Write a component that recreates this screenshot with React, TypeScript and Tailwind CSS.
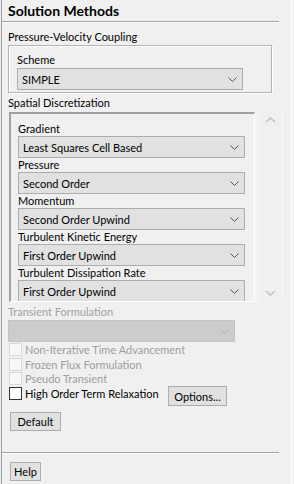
import React from 'react';

const Chevron = ({ color = '#555555' }: { color?: string }) => (
  <svg width="9" height="5" viewBox="0 0 9 5" className="shrink-0">
    <polyline points="0.5,0.5 4.5,4.5 8.5,0.5" fill="none" stroke={color} strokeWidth="1" />
  </svg>
);

const Select = ({ value, className = '' }: { value: string; className?: string }) => (
  <div
    className={`h-[22px] flex items-center justify-between pl-[4px] pr-[5px] bg-[#e1e1e1] border border-[#adadad] text-black ${className}`}
  >
    <span className="leading-none whitespace-nowrap">{value}</span>
    <Chevron />
  </div>
);

const Label = ({ children, className = '' }: { children: React.ReactNode; className?: string }) => (
  <div className={`h-[14px] pb-[2px] flex items-center leading-none whitespace-nowrap ${className}`}>{children}</div>
);

const Check = ({ label, disabled = false, className = '' }: { label: string; disabled?: boolean; className?: string }) => (
  <div className={`flex items-center ${className}`}>
    <div
      className={`w-[13px] h-[13px] ml-[7px] shrink-0 ${
        disabled ? 'bg-[#f7f7f7] border border-[#d9d9d9]' : 'bg-white border border-[#333333]'
      }`}
    />
    <span className={`ml-[3px] leading-none whitespace-nowrap ${disabled ? 'text-[#9d9d9d]' : 'text-black'}`}>
      {label}
    </span>
  </div>
);

const Button = ({ children, className = '' }: { children: React.ReactNode; className?: string }) => (
  <div
    className={`flex items-center justify-center bg-[#e1e1e1] border border-[#adadad] text-black leading-none whitespace-nowrap ${className}`}
  >
    {children}
  </div>
);

const spatial = [
  ['Gradient', 'Least Squares Cell Based'],
  ['Pressure', 'Second Order'],
  ['Momentum', 'Second Order Upwind'],
  ['Turbulent Kinetic Energy', 'First Order Upwind'],
  ['Turbulent Dissipation Rate', 'First Order Upwind'],
];

export default function App() {
  return (
    <div className="w-[294px] h-[484px] bg-[#f0f0f0] pl-[1px] overflow-hidden font-['Lato',sans-serif] text-[11px] text-black">
      <div className="w-[291px] h-full border-l border-[#9c9c9c] border-r border-r-white flex flex-col">
        {/* Title */}
        <div className="h-[21px] flex items-center pl-[6px] text-[14px] font-bold text-black leading-none">
          Solution Methods
        </div>
        <div className="w-[277px] border-t border-[#a0a0a0] border-b border-b-white" />

        {/* Pressure-Velocity Coupling */}
        <div className="h-[22px] flex items-end pl-[6px] pb-[3px] leading-none">Pressure-Velocity Coupling</div>
        <div className="ml-[6px] w-[264px] h-[48px] border border-[#b4b4b4] shadow-[inset_1px_1px_0_#ffffff,1px_1px_0_#ffffff] pl-[8px] pt-[7px]">
          <Label className="h-[15px]">Scheme</Label>
          <Select value="SIMPLE" className="w-[226px]" />
        </div>

        {/* Spatial Discretization */}
        <div className="h-[18px] flex items-center pl-[6px] leading-none">Spatial Discretization</div>
        <div className="ml-[6px] w-[276px] h-[191px] flex">
          <div className="mt-[1px] ml-[1px] w-[246px] h-[190px] border-l-2 border-t-2 border-[#a0a0a0] border-r border-b border-r-white border-b-white pt-[8px] pl-[7px] overflow-hidden">
            {spatial.map(([label, value]) => (
              <div key={label}>
                <Label>{label}</Label>
                <Select value={value} className="w-[227px]" />
              </div>
            ))}
          </div>
          <div className="w-[26px] ml-[2px] h-full border-l border-r border-[#f8f8f8] flex flex-col items-center justify-between pt-[6px] pb-[6px]">
            <svg width="11" height="6" viewBox="0 0 11 6">
              <polyline points="1,5 5.5,1 10,5" fill="none" stroke="#c2c2c2" strokeWidth="1.6" />
            </svg>
            <svg width="11" height="6" viewBox="0 0 11 6">
              <polyline points="1,1 5.5,5 10,1" fill="none" stroke="#c2c2c2" strokeWidth="1.6" />
            </svg>
          </div>
        </div>

        {/* Transient Formulation */}
        <div className="h-[18px] flex items-center pl-[6px] pt-[1px] text-[#a0a0a0] leading-none">Transient Formulation</div>
        <div className="ml-[6px] w-[227px] h-[22px] bg-[#cccccc] border border-[#c4c4c4] flex items-center justify-end pr-[5px]">
          <Chevron color="#b0b0b0" />
        </div>
        <Check label="Non-Iterative Time Advancement" disabled className="h-[15px]" />
        <Check label="Frozen Flux Formulation" disabled className="h-[14px]" />
        <Check label="Pseudo Transient" disabled className="h-[15px]" />
        <div className="h-[20px] flex items-start justify-between w-[225px]">
          <Check label="High Order Term Relaxation" className="h-[15px]" />
          <Button className="w-[59px] h-[20px]">Options...</Button>
        </div>

        <Button className="ml-[8px] mt-[6px] w-[51px] h-[19px]">Default</Button>

        <div className="mt-[21px] w-[277px] border-t border-[#a0a0a0] border-b border-b-white" />
        <Button className="ml-[8px] mt-[8px] w-[31px] h-[19px]">Help</Button>
      </div>
    </div>
  );
}
